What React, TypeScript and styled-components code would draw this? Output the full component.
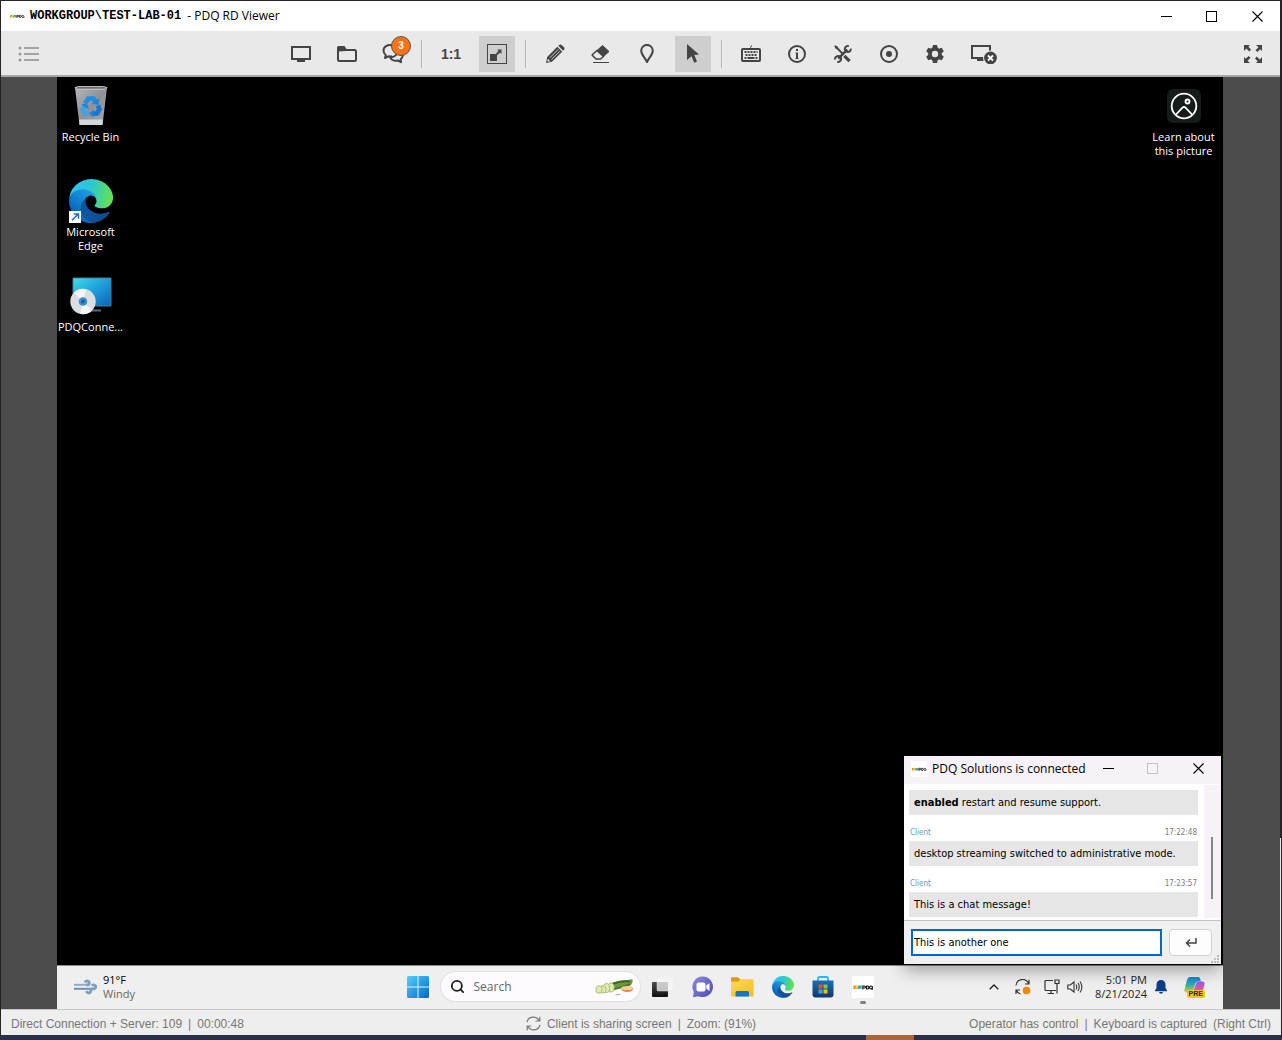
import React from "react";
import styled, { createGlobalStyle, css } from "styled-components";
import { Search } from "lucide-react";

const ui = `"Open Sans", "Noto Sans", sans-serif`;
const chatFont = `"DejaVu Sans Condensed", "Open Sans", sans-serif`;
const ink = "#444444";

const GlobalStyle = createGlobalStyle`
  *, *::before, *::after { box-sizing: border-box; }
  html, body { margin: 0; background: #2b3048; }
  body { font-family: ${ui}; font-size: 12px; color: #000; }
  button, input { font: inherit; color: inherit; margin: 0; }
  svg { display: block; flex: none; }
`;

/* ---------- window frame ---------- */

const Screen = styled.div`
  min-height: 100vh;
  display: flex;
  flex-direction: column;
  background: #2b3048;
`;

const ViewerWindow = styled.main`
  flex: 1;
  display: flex;
  flex-direction: column;
  padding: 1px 2px 0 1px;
  background:
    linear-gradient(#222428 81%, #e8e8e8 81%) right 1px top / 1px 100% no-repeat,
    #222428;
`;

const HostStrip = styled.div`
  height: 5px;
  display: grid;
  grid-template-columns: 866fr 48fr 368fr;
`;

const HostStripMark = styled.span`
  grid-column: 2;
  background: #a86638;
`;

const TitleBar = styled.header`
  height: 30px;
  display: flex;
  align-items: center;
  padding-left: 8px;
  background: #fff;
`;

const TitleText = styled.h1`
  flex: 1;
  margin: 0 0 0 5px;
  display: flex;
  align-items: center;
  gap: 6px;
  font-size: 12px;
  font-weight: 400;
  line-height: 16px;
`;

const HostName = styled.span`
  font-family: "Liberation Mono", monospace;
  font-weight: 700;
`;

const WindowButton = styled.button<{ $w: number }>`
  width: ${(p) => p.$w}px;
  height: 28px;
  padding: 0;
  border: 0;
  background: none;
  display: flex;
  align-items: center;
  justify-content: center;
`;

/* ---------- toolbar ---------- */

const Toolbar = styled.nav`
  height: 46px;
  display: grid;
  grid-template-columns: 1fr auto 1fr;
  align-items: center;
  padding: 2px 9px 0 10px;
  background: #e9e9e9;
  border-bottom: 2px solid #a4a7a4;
`;

const Tools = styled.div`
  display: flex;
  align-items: center;
  gap: 10px;
  padding-left: 6px;
`;

const ToolButton = styled.button<{ $on?: boolean; $wide?: boolean; $end?: boolean }>`
  position: relative;
  width: ${(p) => (p.$wide ? 42 : 36)}px;
  height: 36px;
  padding: 0;
  border: 0;
  background: ${(p) => (p.$on ? "#cecece" : "transparent")};
  color: ${ink};
  display: flex;
  align-items: center;
  justify-content: center;
  ${(p) => p.$end && css`justify-self: end;`}
`;

const Divider = styled.span`
  width: 2px;
  height: 28px;
  background: #b4b4b4;
  border-right: 1px solid #efefef;
`;

const Ratio = styled.span`
  font: 700 14px/20px "Liberation Sans", Arial, sans-serif;
`;

const Badge = styled.span`
  position: absolute;
  top: 0;
  right: 0;
  width: 20px;
  height: 20px;
  border: 1px solid #555;
  border-radius: 50%;
  background: #f97316;
  color: #fff;
  font: 700 10px/18px "Liberation Sans", Arial, sans-serif;
  text-align: center;
`;

/* ---------- remote desktop ---------- */

const Stage = styled.div`
  flex: 1;
  display: flex;
  padding: 0 57px 0 56px;
  background: #4b4b4b;
`;

const Remote = styled.section`
  position: relative;
  overflow: hidden;
  flex: 1;
  display: flex;
  flex-direction: column;
`;

const Desktop = styled.div`
  position: relative;
  flex: 1;
  display: flex;
  justify-content: space-between;
  align-items: flex-start;
  padding: 7px 0;
  background: #000;
`;

const IconColumn = styled.div`
  display: flex;
  flex-direction: column;
`;

const Shortcut = styled.button<{ $w: number }>`
  width: ${(p) => p.$w}px;
  height: 95px;
  padding: 0;
  border: 0;
  background: none;
  color: #fff;
  font-size: 11px;
  line-height: 14px;
  display: flex;
  flex-direction: column;
  align-items: center;
  gap: 2px;
`;

const ShortcutArt = styled.span`
  height: 44px;
  display: flex;
  align-items: center;
`;

/* ---------- chat window ---------- */

const ChatWindow = styled.section`
  position: absolute;
  right: 2px;
  bottom: 1px;
  z-index: 1;
  width: 317px;
  background: #fff;
  box-shadow: 0 6px 16px rgba(0, 0, 0, 0.35);
`;

const ChatHeader = styled.header`
  height: 28px;
  display: flex;
  align-items: center;
  padding: 0 0 3px 7px;
  background: #f7f2f7;
`;

const ChatTitle = styled.h2`
  flex: 1;
  margin: 0 0 0 5px;
  font-size: 12px;
  font-weight: 400;
  line-height: 16px;
  white-space: nowrap;
`;

const ChatBody = styled.div`
  display: flex;
  margin-bottom: 2px;
`;

const Log = styled.div`
  flex: 1;
  padding: 6px 6px 1px 5px;
  font-family: ${chatFont};
  font-size: 11px;
`;

const Message = styled.p`
  margin: 0;
  padding: 0 5px;
  background: #e6e6e6;
  line-height: 25px;
`;

const Meta = styled.div`
  height: 26px;
  padding: 13px 1px 0;
  display: flex;
  justify-content: space-between;
  font-size: 8px;
  line-height: 10px;
  color: #7b7b7b;
`;

const Sender = styled.span`
  color: #6f93b4;
`;

const Gutter = styled.div`
  width: 17px;
  margin-top: 1px;
  padding: 52px 0 19px 7px;
  background: #f7f2f7;
`;

const Thumb = styled.div`
  width: 2px;
  height: 100%;
  background: #858585;
`;

const Composer = styled.form`
  position: relative;
  display: flex;
  align-items: center;
  gap: 7px;
  height: 44px;
  padding: 0 9px 1px 7px;
  border-top: 1px solid #c4c4c4;
  background: #efefef;
`;

const ChatInput = styled.input`
  flex: 1;
  min-width: 0;
  height: 27px;
  padding: 0 1px;
  border: 2px solid #0067d0;
  outline: 0;
  background: #fff;
  font-family: ${chatFont};
  font-size: 11px;
`;

const SendButton = styled.button`
  width: 43px;
  height: 27px;
  padding: 0;
  border: 1px solid #d0d0d0;
  border-radius: 4px;
  background: #fdfdfd;
  display: flex;
  align-items: center;
  justify-content: center;
`;

const Grip = styled.span`
  position: absolute;
  right: 2px;
  bottom: 1px;
`;

/* ---------- taskbar ---------- */

const Taskbar = styled.footer`
  height: 44px;
  display: grid;
  grid-template-columns: 1fr auto 1fr;
  align-items: center;
  padding: 0 17px 2px 16px;
  background: #efefef;
  border-top: 1px solid #8a8a8a;
`;

const Weather = styled.button`
  justify-self: start;
  padding: 0;
  border: 0;
  background: none;
  display: flex;
  align-items: center;
  gap: 6px;
  font-size: 11px;
  line-height: 14px;
  text-align: left;
`;

const Muted = styled.span`
  display: block;
  color: #666;
`;

const Pinned = styled.div`
  display: flex;
  align-items: center;
  padding-left: 2px;
`;

const TaskButton = styled.button<{ $w?: number; $running?: boolean }>`
  position: relative;
  width: ${(p) => p.$w ?? 24}px;
  height: 32px;
  padding: 0;
  border: 0;
  background: none;
  display: flex;
  align-items: center;
  justify-content: center;
  ${(p) =>
    p.$running &&
    css`
      &::after {
        content: "";
        position: absolute;
        bottom: -1px;
        width: 6px;
        height: 3px;
        border-radius: 2px;
        background: #808080;
      }
    `}
`;

const TaskApps = styled.div`
  display: flex;
  gap: 16px;
`;

const SearchPill = styled.label`
  width: 199px;
  height: 29px;
  margin: 0 11px 0 12px;
  padding: 0 5px 0 9px;
  display: flex;
  align-items: center;
  gap: 9px;
  border-radius: 15px;
  background: #fdfbfd;
  box-shadow: 0 0 0 1px #e2e2e2, 0 1px 1px #c8c8c8;
`;

const SearchInput = styled.input`
  flex: 1;
  min-width: 0;
  padding: 0;
  border: 0;
  outline: 0;
  background: none;
  font-size: 12px;
  &::placeholder { color: #666; opacity: 1; }
`;

const Tray = styled.div`
  justify-self: end;
  display: flex;
  align-items: center;
  margin-right: -12px;
`;

const Clock = styled.time`
  width: 64px;
  margin-right: 5px;
  font-size: 11px;
  line-height: 14px;
  text-align: right;
  white-space: nowrap;
  color: #222;
`;

const PreTag = styled.span`
  position: absolute;
  right: 13px;
  bottom: 5px;
  padding: 0 2px;
  border-radius: 2px;
  background: #f6c21c;
  color: #222;
  font: 700 7px/8px "Liberation Sans", Arial, sans-serif;
`;

/* ---------- status bar ---------- */

const StatusBar = styled.footer`
  height: 26px;
  display: grid;
  grid-template-columns: 1fr auto 1fr;
  align-items: center;
  padding: 2px 9px 0 10px;
  border-top: 1px solid #c8c8c8;
  background: #eeeeee;
  color: #777;
  font: 12px/16px "Liberation Sans", Arial, sans-serif;
`;

const StatusGroup = styled.div<{ $end?: boolean }>`
  display: flex;
  align-items: center;
  gap: 6px;
  white-space: nowrap;
  justify-self: ${(p) => (p.$end ? "end" : "start")};
`;

/* ---------- drawings ---------- */

const PdqLogo = ({ size = 16, plain = false }: { size?: number; plain?: boolean }) => (
  <svg width={size} height={size} viewBox="0 0 22 22" aria-hidden="true">
    {!plain && <rect width="22" height="22" fill="#fff" />}
    <path d="M1.500 9.500H4.500L3.500 13H1z" fill="#f2902b" />
    <path d="M4.200 9.500H6.500L5.500 13H3.300z" fill="#f6d32d" />
    <path d="M6.300 9.500H8.500L7.500 13H5.300z" fill="#3fb56b" />
    <path d="M8.300 9.500H10L9.300 13H7.300z" fill="#35a7d8" />
    <path d="M10.800 13.500V10h1.700a1 1 0 0 1 0 2h-1.700M14.600 10v3h.8a1.500 1.500 0 0 0 0-3zM19 10a1.500 1.500 0 1 0 .1 0M19.300 12l1.500 1.500" fill="none" stroke="#111" strokeWidth="1.100" />
  </svg>
);

const MinimizeGlyph = () => (
  <svg width="11" height="11"><path d="M0 5.500h11" stroke="#000" /></svg>
);
const MaximizeGlyph = ({ color = "#000" }: { color?: string }) => (
  <svg width="11" height="11"><rect x=".5" y=".5" width="10" height="10" fill="none" stroke={color} /></svg>
);
const CloseGlyph = () => (
  <svg width="11" height="11"><path d="M.5.5l10 10M10.500.5l-10 10" stroke="#000" strokeWidth="1.100" /></svg>
);

const ListIcon = () => (
  <svg width="22" height="16" viewBox="0 0 22 16" fill="#999">
    <circle cx="2" cy="2" r="1.500" /><circle cx="2" cy="8" r="1.500" /><circle cx="2" cy="14" r="1.500" />
    <path d="M6 1h15v2H6zM6 7h15v2H6zM6 13h15v2H6z" fill="#a4a4a4" />
  </svg>
);
const MonitorIcon = () => (
  <svg width="20" height="16"><path d="M1 1h18v12H1z" fill="none" stroke={ink} strokeWidth="2" /><path d="M6 14h8v2H6z" fill={ink} /></svg>
);
const FolderIcon = () => (
  <svg width="20" height="16" fill="none" stroke={ink} strokeWidth="2">
    <path d="M1 4.500V13.500q0 1.500 1.500 1.500h15q1.500 0 1.500-1.500V5.500q0-1.500-1.500-1.500H9.500z" />
    <path d="M0 5V1.500Q0 0 1.500 0H7.500L9.500 3V5z" fill={ink} stroke="none" />
  </svg>
);
const ChatIcon = () => (
  <svg width="22" height="20" fill="none" stroke={ink} strokeWidth="2" strokeLinejoin="round">
    <path d="M11 1.500C5 0 1.500 3 1.500 6.500c0 2 1 3.500 2.300 4.500L3 14l4-1.800c1 .3 2 .3 3 .1" />
    <path d="M19.500 8c2 2.500 1.500 5.500-.8 7.200l.3 3-3.300-1.700c-3.500.7-6.500-.5-7.700-3.500 3 .500 6.500-1 7.500-5" />
  </svg>
);
const FitIcon = () => (
  <svg width="20" height="20">
    <rect x=".5" y=".5" width="19" height="19" fill="none" stroke={ink} />
    <path d="M3 10h7v7H3zM10 5.500h4.500v4.500L13 8.500l-2.500 2.500-1.500-1.500L11.500 7z" fill={ink} />
  </svg>
);
const PencilIcon = () => (
  <svg width="20" height="20" viewBox="0 0 20 20">
    <path d="M1 19l1.200-6L12.300 2.800l4.900 4.900L7 17.800z" fill={ink} />
    <path d="M13.300 1.800 14.600.7q1-.7 2 .2l2.600 2.600q.8 1 0 2L18.200 6.700z" fill={ink} />
    <path d="M4.800 13.800 13.200 5.400M6.600 15.500l8.300-8.300" stroke="#e9e9e9" strokeWidth=".8" />
    <path d="M2.800 14.800l2.400 2.400-2 .5-.8-.8z" fill="#e9e9e9" />
  </svg>
);
const EraserIcon = () => (
  <svg width="20" height="20" viewBox="0 0 20 20">
    <path d="M11.500 1.500 18 7.500 12.500 12.500 6 6.500z" fill={ink} stroke={ink} strokeLinejoin="round" />
    <path d="M6 6.500 12.500 12.500 9.500 15H5L1.500 11.500Q1 11 1.500 10.500z" fill="none" stroke={ink} strokeWidth="1.600" strokeLinejoin="round" />
    <path d="M2 18.500h16" stroke={ink} />
  </svg>
);
const PinIcon = () => (
  <svg width="14" height="20"><path d="M7 18C5 13.500 1.200 11 1.200 6.700a5.800 5.800 0 0 1 11.600 0C12.800 11 9 13.500 7 18z" fill="none" stroke={ink} strokeWidth="2" strokeLinejoin="round" /></svg>
);
const PointerIcon = () => (
  <svg width="12" height="20"><path d="M0 0 12 10.500 7.300 11 10 17.500 7.200 18.700 4.500 12.200 0 16z" fill={ink} /></svg>
);
const KeyboardIcon = () => (
  <svg width="20" height="18" fill="none" stroke={ink}>
    <rect x="1" y="4" width="18" height="12" rx="1" strokeWidth="2" />
    <path d="M9.500 3V2.500q0-1 1-1v-1" />
    <path d="M3.500 7h13M4.500 10h11" strokeWidth="1.800" strokeDasharray="2 1" />
    <path d="M3.500 13h2M6.500 13h7M14.500 13h2" strokeWidth="1.800" />
  </svg>
);
const InfoIcon = () => (
  <svg width="18" height="18"><circle cx="9" cy="9" r="8" fill="none" stroke={ink} strokeWidth="2" /><path d="M8 4h2v2H8zM7.500 7.500H10V13h.5v1h-3v-1H8V8.500h-.5z" fill={ink} /></svg>
);
const ToolsIcon = () => (
  <svg width="18" height="18" viewBox="0 0 18 18">
    <path d="M1 1 9.500 9.500" stroke={ink} strokeWidth="1.800" fill="none" />
    <path d="M10.300 10.800 15.600 16.100" stroke={ink} strokeWidth="3.200" />
    <path d="M.5.500 3.600 1.600 4.200 3.300 3 4.200 1.500 3.600z" fill={ink} />
    <path d="M4.300 13.700 13.300 4.700" stroke={ink} strokeWidth="2.400" />
    <path d="M14.800 1.200A3 3 0 1 0 16.800 3.600M3.300 16.800A3 3 0 1 0 1.200 14.600" fill="none" stroke={ink} strokeWidth="2" />
  </svg>
);
const RecordIcon = () => (
  <svg width="18" height="18"><circle cx="9" cy="9" r="8" fill="none" stroke={ink} strokeWidth="2" /><circle cx="9" cy="9" r="3" fill={ink} /></svg>
);
const GearIcon = () => (
  <svg width="18" height="18" fill={ink}>
    {[0, 60, 120].map((a) => (
      <path key={a} transform={`rotate(${a} 9 9)`} d="M7 0h4l1 4v10l-1 4H7l-1-4V4z" mask="url(#gearHole)" />
    ))}
    <circle cx="9" cy="9" r="5" fill="none" stroke={ink} strokeWidth="3.500" />
    <circle cx="9" cy="9" r="3.200" fill="#e9e9e9" />
  </svg>
);
const DisconnectIcon = () => (
  <svg width="26" height="20">
    <path d="M1 2h18v12H1z" fill="none" stroke={ink} strokeWidth="2" /><path d="M6 15h7v2H6z" fill={ink} />
    <circle cx="19.500" cy="14" r="7.500" fill="#e9e9e9" /><circle cx="19.500" cy="14" r="6.400" fill={ink} />
    <path d="M17 11.500l5 5M22 11.500l-5 5" stroke="#fff" strokeWidth="1.800" />
  </svg>
);
const FullscreenIcon = () => (
  <svg width="18" height="18" fill={ink}>
    {[0, 90, 180, 270].map((a) => (
      <path key={a} transform={`rotate(${a} 9 9)`} d="M0 0h6L4.300 1.800 7 4.600 5.300 6.500 2.200 3.500 0 6z" />
    ))}
  </svg>
);

const EdgeArt = ({ size }: { size: number }) => (
  <svg width={size} height={size} viewBox="0 0 256 256">
    <defs>
      <linearGradient id="edgeDeep" x1="60" y1="177" x2="236" y2="177" gradientUnits="userSpaceOnUse"><stop stopColor="#0c59a4" /><stop offset="1" stopColor="#114a8b" /></linearGradient>
      <linearGradient id="edgeBlue" x1="150" y1="100" x2="45" y2="215" gradientUnits="userSpaceOnUse"><stop stopColor="#1b9de2" /><stop offset=".5" stopColor="#1383d2" /><stop offset="1" stopColor="#0a62b8" /></linearGradient>
      <linearGradient id="edgeGreen" x1="20" y1="60" x2="250" y2="110" gradientUnits="userSpaceOnUse"><stop stopColor="#35c1f1" /><stop offset=".45" stopColor="#2cc7cd" /><stop offset="1" stopColor="#66e24c" /></linearGradient>
    </defs>
    <path fill="url(#edgeDeep)" d="M231 190.500c-3.400 1.800-6.900 3.400-10.500 4.700a101.600 101.600 0 0 1-35.900 6.400c-47.300 0-88.500-32.500-88.500-74.300A31.500 31.500 0 0 1 112.600 100c-42.800 1.800-53.800 46.400-53.800 72.500 0 74 68.100 81.400 82.800 81.400 7.900 0 19.800-2.300 27-4.600l1.300-.4a128.300 128.300 0 0 0 66.600-52.800 4 4 0 0 0-5.500-5.600z" />
    <path fill="url(#edgeBlue)" d="M105.700 241.400a79.200 79.200 0 0 1-22.700-21.300 80.700 80.700 0 0 1 29.500-120c3.200-1.500 8.500-4.100 15.600-4a32.400 32.400 0 0 1 25.700 13 31.900 31.900 0 0 1 6.300 18.700c0-.2 24.500-79.600-80-79.600-43.900 0-80 41.600-80 78.200a130.200 130.200 0 0 0 12.100 56 128 128 0 0 0 156.400 67 75.500 75.500 0 0 1-62.800-8z" />
    <path fill="url(#edgeGreen)" d="M152.300 148.900c-.9 1-3.400 2.500-3.400 5.600 0 2.600 1.700 5.200 4.800 7.300 14.400 10.100 41.700 8.700 41.800 8.700a59.600 59.600 0 0 0 30.300-8.300 61.400 61.400 0 0 0 30.400-52.900c.3-22.400-8-37.300-11.300-43.900C223.500 23.900 177.700 0 128 0A128 128 0 0 0 0 126.200c.5-36.500 36.800-66 80-66 3.500 0 23.500.3 42 10.100 16.300 8.600 24.900 18.900 30.800 29.200 6.200 10.700 7.300 24.100 7.300 29.500 0 5.300-2.700 13.300-7.800 19.900z" />
  </svg>
);

const RecycleArt = () => (
  <svg width="34" height="40" viewBox="0 0 34 40">
    <defs><linearGradient id="bin" x1="0" y1="0" x2="1" y2="1"><stop stopColor="#b4b6ba" /><stop offset=".5" stopColor="#8f9196" /><stop offset="1" stopColor="#a5a7ab" /></linearGradient></defs>
    <path d="M1 1.500h32L28.500 39h-23z" fill="url(#bin)" />
    <path d="M1 1.500 4.500.500h25l3.500 1-1.500 1.700h-29z" fill="#6e7075" stroke="#d8dade" strokeWidth=".8" />
    <path d="M5 33.500h24l-.6 5.500H5.600z" fill="#d2d6dd" />
    <g fill="none" strokeWidth="4.600">
      <path d="M11 17.500 14.300 12.500H19.500L21.500 16" stroke="#1f8fe6" />
      <path d="M24 19.500 25.500 23 23 27.500H18.500" stroke="#1277d2" />
      <path d="M14.500 27.500H11L8.800 23.800 11 20.500" stroke="#3aa3ee" />
    </g>
    <path d="M18 17.500l6.500 1.500L25.500 12zM19.500 23.200v8.300L15 27.500zM7 18.500l6-1 2 6z" fill="#1b86de" />
  </svg>
);

const EdgeShortcutArt = () => (
  <svg width="44" height="44" viewBox="0 0 44 44">
    <EdgeArt size={44} />
    <rect y="32" width="12" height="12" fill="#fff" />
    <path d="M3 41.300 8.500 35.800M4.800 35h4.700v4.700" fill="none" stroke="#1a6fc4" strokeWidth="1.500" />
  </svg>
);

const InstallerArt = () => (
  <svg width="42" height="38" viewBox="0 0 42 38">
    <defs><linearGradient id="msi" x1="0" y1="0" x2="1" y2="1"><stop stopColor="#3fdcea" /><stop offset=".5" stopColor="#1e9fdb" /><stop offset="1" stopColor="#0c62b8" /></linearGradient></defs>
    <path d="M3 1h38v28H3z" fill="url(#msi)" stroke="#4a7d96" />
    <path d="M20 32.500h11v2H20z" fill="#5d6b75" />
    <circle cx="13" cy="24.500" r="12.700" fill="#dcdde0" />
    <path d="M13 24.500 4 15.500A12.700 12.700 0 0 1 16 12.200zM13 24.500 22 33.500A12.700 12.700 0 0 1 10 36.800z" fill="#f6f6f8" />
    <circle cx="13" cy="24.500" r="4.300" fill="#3b8fd0" /><circle cx="13" cy="24.500" r="2" fill="#1d5c96" />
  </svg>
);

const SpotlightArt = () => (
  <svg width="34" height="34" viewBox="0 0 34 34">
    <rect width="34" height="34" rx="6" fill="#161c1a" />
    <g fill="none" stroke="#fff" strokeWidth="1.800">
      <circle cx="17" cy="17" r="12.300" /><circle cx="20.500" cy="12.500" r="2" />
      <path d="M8.500 26 15.700 18.500q1.300-1.200 2.600 0L25.500 26" />
    </g>
  </svg>
);

const WindArt = () => (
  <svg width="24" height="16" viewBox="0 0 24 16" fill="none">
    <path d="M1 5.800h13" stroke="#8fabc9" strokeWidth="2" />
    <path d="M1 9.800h19" stroke="#6d8fb4" strokeWidth="2" />
    <path d="M12 3.500a2.200 2.200 0 1 1 3.500 2.300H13M19 6.800a2 2 0 1 1 2 3H18M13.500 12a2.200 2.200 0 1 0 3.200-2.200" stroke="#7f9dbf" strokeWidth="2.800" />
  </svg>
);

const StartArt = () => (
  <svg width="22" height="22">
    <defs><linearGradient id="start" x1="0" y1="0" x2="22" y2="22" gradientUnits="userSpaceOnUse"><stop stopColor="#4fd0fb" /><stop offset="1" stopColor="#0469c6" /></linearGradient></defs>
    <path d="M0 1.500Q0 0 1.500 0H10.500V10.500H0zM11.500 0H20.500Q22 0 22 1.500V10.500H11.500zM0 11.500H10.500V22H1.500Q0 22 0 20.500zM11.500 11.500H22V20.500Q22 22 20.500 22H11.500z" fill="url(#start)" />
  </svg>
);

const ZucchiniArt = () => (
  <svg width="40" height="18" viewBox="0 0 40 18">
    <path d="M13 6.500Q24 1.500 34 2L37.500 1V4.500Q36 9 25 10.500L15 13.500z" fill="#6d9a3f" />
    <path d="M16 6.500Q26 2.500 35 3.500" stroke="#3c6a1f" strokeWidth="2" fill="none" />
    <path d="M19 11Q28 9 35.500 6" stroke="#44742a" strokeWidth="1.500" fill="none" />
    <g fill="#e3e8b4" stroke="#9bb55e" strokeWidth=".8">
      <ellipse cx="16" cy="9.500" rx="3.200" ry="4.500" /><ellipse cx="11.500" cy="10" rx="3.200" ry="4.500" /><ellipse cx="8" cy="11.500" rx="3" ry="3.800" /><ellipse cx="4" cy="11.500" rx="3.200" ry="3.800" />
    </g>
    <path d="M26 10h12.500Q38 14 32.300 14 26.500 14 26 10z" fill="#e08a47" /><ellipse cx="32.300" cy="10" rx="6.200" ry="2" fill="#f7cf9b" />
    <path d="M20.500 16.500h5" stroke="#e9a0a0" />
  </svg>
);

const TaskViewArt = () => (
  <svg width="22" height="20">
    <defs><linearGradient id="tv" x1="0" y1="0" x2="0" y2="1"><stop stopColor="#4a4a4a" /><stop offset="1" stopColor="#111" /></linearGradient></defs>
    <rect y="5" width="16" height="15" rx="1" fill="url(#tv)" />
    <rect x="5" width="17" height="14" rx="1" fill="#f7f7f7" fillOpacity=".75" stroke="#e2e2e2" strokeWidth=".5" />
  </svg>
);

const MeetArt = () => (
  <svg width="22" height="22">
    <defs><linearGradient id="meet" x1="0" y1="0" x2="1" y2="1"><stop stopColor="#8f8cd8" /><stop offset="1" stopColor="#4a49b8" /></linearGradient></defs>
    <path d="M11 .5a10.300 10.300 0 1 1-4.500 19.700L1 21.300 1.800 16A10.300 10.300 0 0 1 11 .5z" fill="url(#meet)" />
    <rect x="4.500" y="6.500" width="9" height="9" rx="2" fill="#fff" /><path d="M14.300 9.500 17.500 7v8l-3.200-2.500z" fill="#fff" />
  </svg>
);

const ExplorerArt = () => (
  <svg width="23" height="20">
    <defs><linearGradient id="exp" x1="0" y1="0" x2="1" y2="1"><stop stopColor="#fddc62" /><stop offset="1" stopColor="#f6b91c" /></linearGradient></defs>
    <path d="M0 1.500Q0 .3 1.300.3H7L9.300 2.500H14V6H0z" fill="#dd9a10" />
    <path d="M0 4.500H7.500L10 2.300H21.500Q22.500 2.300 22.500 3.500V19.500H0z" fill="url(#exp)" />
    <path d="M4.500 19.500V15.500Q4.500 14 6 14H16.500Q18 14 18 15.500V19.500z" fill="#1673c6" />
  </svg>
);

const StoreArt = () => (
  <svg width="22" height="22">
    <defs><linearGradient id="store" x1="0" y1="0" x2="0" y2="1"><stop stopColor="#1571bf" /><stop offset="1" stopColor="#14366d" /></linearGradient></defs>
    <path d="M6 5V2.500Q6 1 7.500 1h7Q16 1 16 2.500V5" fill="none" stroke="#2cb5ee" strokeWidth="1.800" />
    <path d="M.5 4.500h21V18.500Q21.500 21.500 18.500 21.500H3.500Q.5 21.500.5 18.500z" fill="url(#store)" />
    <path d="M6.500 8.500h4v4h-4z" fill="#f1511b" /><path d="M11.500 8.500h4v4h-4z" fill="#80cc28" /><path d="M6.500 13.500h4v4h-4z" fill="#27b0ee" /><path d="M11.500 13.500h4v4h-4z" fill="#fbbc09" />
  </svg>
);

const TrayUpGlyph = () => (
  <svg width="10" height="6"><path d="M.7 5.300 5 1l4.300 4.300" fill="none" stroke="#222" strokeWidth="1.300" /></svg>
);
const TraySyncGlyph = () => (
  <svg width="16" height="16" fill="none" stroke="#333" strokeWidth="1.200">
    <path d="M1 6.500A6.500 6.500 0 0 1 13.500 4.500M14 .8V5h-4M1 15V11h4M1.300 11.200Q2.500 14 5.500 15" />
    <circle cx="11.500" cy="11.500" r="3.800" fill="#e98a00" stroke="none" />
  </svg>
);
const TrayNetGlyph = () => (
  <svg width="16" height="16" fill="none" stroke="#333" strokeWidth="1.200">
    <path d="M9 1.500H2Q1 1.500 1 2.500v8q0 1 1 1h10M7 11.500v3M3.500 14.500H10M11 1h4v3.500h-4zM13 4.500V14.500" />
  </svg>
);
const TraySpeakerGlyph = () => (
  <svg width="16" height="14" fill="none" stroke="#333" strokeWidth="1.100">
    <path d="M.8 5v4h2.500L7 12V2L3.300 5zM9 4.500Q10.500 7 9 9.500M11 3Q13.500 7 11 11M13 1.500Q16.800 7 13 12.500" />
  </svg>
);
const BellGlyph = () => (
  <svg width="12" height="14" fill="#0a3f8a">
    <path d="M6 0a4.500 4.500 0 0 1 4.500 4.500V8L12 10.500v.8H0v-.8L1.500 8V4.500A4.500 4.500 0 0 1 6 0zM4 12h4q-.3 1.800-2 1.800T4 12z" />
  </svg>
);

const CopilotArt = () => (
  <svg width="21" height="20" viewBox="0 0 21 20">
    <defs>
      <linearGradient id="cpA" x1="0" y1="0" x2="0" y2="1"><stop stopColor="#1c7fe0" /><stop offset=".5" stopColor="#29b3a5" /><stop offset="1" stopColor="#e8c62a" /></linearGradient>
      <linearGradient id="cpB" x1="0" y1="0" x2="0" y2="1"><stop stopColor="#9a5ce8" /><stop offset=".5" stopColor="#e5569c" /><stop offset="1" stopColor="#f58a4b" /></linearGradient>
    </defs>
    <path d="M6 0h8q1.800 0 2.300 2l.6 2.500h-3q-2 0-2.600 2L9 13.500Q8.500 15.500 6.500 15.500H2.500Q0 15.500.5 12.500L3 3Q3.800 0 6 0z" fill="url(#cpA)" />
    <path d="M15 19.500H8q-2 0-2.400-2L5 15.500h2q2 0 2.600-2L12 6.500Q12.500 4.500 14.500 4.500h4q2.500 0 2 3L18 16.500q-.8 3-3 3z" fill="url(#cpB)" />
  </svg>
);

const SharingIcon = () => (
  <svg width="15" height="15" fill="none" stroke="#777" strokeWidth="1.200">
    <path d="M1 6A6.500 6.500 0 0 1 13 4.500M13.800.8V5H9.600M14 9A6.500 6.500 0 0 1 2 10.500M1.200 14.200V10h4.200" />
  </svg>
);

/* ---------- content ---------- */

const messages = [
  { from: "Client", at: "17:22:48", text: "desktop streaming switched to administrative mode." },
  { from: "Client", at: "17:23:57", text: "This is a chat message!" },
];

const editTools = [
  { name: "Draw", icon: <PencilIcon /> },
  { name: "Erase", icon: <EraserIcon /> },
  { name: "Pin", icon: <PinIcon /> },
  { name: "Pointer", icon: <PointerIcon />, on: true },
];

const sessionTools = [
  { name: "Keyboard", icon: <KeyboardIcon /> },
  { name: "Information", icon: <InfoIcon /> },
  { name: "Tools", icon: <ToolsIcon /> },
  { name: "Record", icon: <RecordIcon /> },
  { name: "Settings", icon: <GearIcon /> },
  { name: "Disconnect", icon: <DisconnectIcon />, wide: true },
];

const taskApps = [
  { name: "Task view", icon: <TaskViewArt /> },
  { name: "Chat", icon: <MeetArt /> },
  { name: "File Explorer", icon: <ExplorerArt /> },
  { name: "Microsoft Edge", icon: <EdgeArt size={22} /> },
  { name: "Microsoft Store", icon: <StoreArt /> },
  { name: "PDQ", icon: <PdqLogo size={22} />, running: true },
];

export default function App() {
  return (
    <Screen>
      <GlobalStyle />
      <ViewerWindow>
        <TitleBar>
          <PdqLogo plain />
          <TitleText>
            <HostName>WORKGROUP\TEST-LAB-01</HostName>
            <span>- PDQ RD Viewer</span>
          </TitleText>
          <WindowButton $w={46} aria-label="Minimize"><MinimizeGlyph /></WindowButton>
          <WindowButton $w={45} aria-label="Maximize"><MaximizeGlyph /></WindowButton>
          <WindowButton $w={46} aria-label="Close"><CloseGlyph /></WindowButton>
        </TitleBar>

        <Toolbar>
          <ToolButton aria-label="Menu"><ListIcon /></ToolButton>
          <Tools>
            <ToolButton aria-label="Screen"><MonitorIcon /></ToolButton>
            <ToolButton aria-label="Files"><FolderIcon /></ToolButton>
            <ToolButton aria-label="Chat"><ChatIcon /><Badge>3</Badge></ToolButton>
            <Divider />
            <ToolButton><Ratio>1:1</Ratio></ToolButton>
            <ToolButton $on aria-label="Fit to window"><FitIcon /></ToolButton>
            <Divider />
            {editTools.map((t) => (
              <ToolButton key={t.name} aria-label={t.name} $on={t.on}>{t.icon}</ToolButton>
            ))}
            <Divider />
            {sessionTools.map((t) => (
              <ToolButton key={t.name} aria-label={t.name} $wide={t.wide}>{t.icon}</ToolButton>
            ))}
          </Tools>
          <ToolButton $end aria-label="Full screen"><FullscreenIcon /></ToolButton>
        </Toolbar>

        <Stage>
          <Remote>
            <Desktop>
              <IconColumn>
                <Shortcut $w={67}><ShortcutArt><RecycleArt /></ShortcutArt>Recycle Bin</Shortcut>
                <Shortcut $w={67}><ShortcutArt><EdgeShortcutArt /></ShortcutArt>Microsoft Edge</Shortcut>
                <Shortcut $w={67}><ShortcutArt><InstallerArt /></ShortcutArt>PDQConne...</Shortcut>
              </IconColumn>
              <Shortcut $w={79}><ShortcutArt><SpotlightArt /></ShortcutArt>Learn about this picture</Shortcut>

              <ChatWindow>
                <ChatHeader>
                  <PdqLogo />
                  <ChatTitle>PDQ Solutions is connected</ChatTitle>
                  <WindowButton $w={45} aria-label="Minimize chat"><MinimizeGlyph /></WindowButton>
                  <WindowButton $w={45} aria-label="Maximize chat" disabled><MaximizeGlyph color="#c4c0c4" /></WindowButton>
                  <WindowButton $w={46} aria-label="Close chat"><CloseGlyph /></WindowButton>
                </ChatHeader>
                <ChatBody>
                  <Log>
                    <Message><strong>enabled</strong> restart and resume support.</Message>
                    {messages.map((m) => (
                      <React.Fragment key={m.at}>
                        <Meta><Sender>{m.from}</Sender><time>{m.at}</time></Meta>
                        <Message>{m.text}</Message>
                      </React.Fragment>
                    ))}
                  </Log>
                  <Gutter><Thumb /></Gutter>
                </ChatBody>
                <Composer onSubmit={(e) => e.preventDefault()}>
                  <ChatInput aria-label="Message" defaultValue="This is another one" />
                  <SendButton aria-label="Send">
                    <svg width="12" height="9"><path d="M11 0V5H2M5 1.500 1.500 5 5 8.500" fill="none" stroke="#444" strokeWidth="1.500" /></svg>
                  </SendButton>
                  <Grip>
                    <svg width="8" height="8" fill="#bbb"><path d="M6 0h2v2H6zM3 3h2v2H3zM6 3h2v2H6zM0 6h2v2H0zM3 6h2v2H3zM6 6h2v2H6z" /></svg>
                  </Grip>
                </Composer>
              </ChatWindow>
            </Desktop>

            <Taskbar>
              <Weather>
                <WindArt />
                <span>91°F<Muted>Windy</Muted></span>
              </Weather>
              <Pinned>
                <TaskButton $w={22} aria-label="Start"><StartArt /></TaskButton>
                <SearchPill>
                  <Search size={15} color="#222" strokeWidth={3} />
                  <SearchInput placeholder="Search" aria-label="Search" />
                  <ZucchiniArt />
                </SearchPill>
                <TaskApps>
                  {taskApps.map((a) => (
                    <TaskButton key={a.name} aria-label={a.name} $running={a.running}>{a.icon}</TaskButton>
                  ))}
                </TaskApps>
              </Pinned>
              <Tray>
                <TaskButton $w={30} aria-label="Hidden icons"><TrayUpGlyph /></TaskButton>
                <TaskButton $w={28} aria-label="Updates"><TraySyncGlyph /></TaskButton>
                <TaskButton $w={30} aria-label="Network"><TrayNetGlyph /></TaskButton>
                <TaskButton $w={16} aria-label="Volume"><TraySpeakerGlyph /></TaskButton>
                <Clock>5:01 PM<br />8/21/2024</Clock>
                <TaskButton $w={18} aria-label="Notifications"><BellGlyph /></TaskButton>
                <TaskButton $w={48} aria-label="Copilot"><CopilotArt /><PreTag>PRE</PreTag></TaskButton>
              </Tray>
            </Taskbar>
          </Remote>
        </Stage>

        <StatusBar>
          <StatusGroup><span>Direct Connection + Server: 109</span><span>|</span><span>00:00:48</span></StatusGroup>
          <StatusGroup><SharingIcon /><span>Client is sharing screen</span><span>|</span><span>Zoom: (91%)</span></StatusGroup>
          <StatusGroup $end><span>Operator has control</span><span>|</span><span>Keyboard is captured</span><span>(Right Ctrl)</span></StatusGroup>
        </StatusBar>
      </ViewerWindow>
      <HostStrip><HostStripMark /></HostStrip>
    </Screen>
  );
}
